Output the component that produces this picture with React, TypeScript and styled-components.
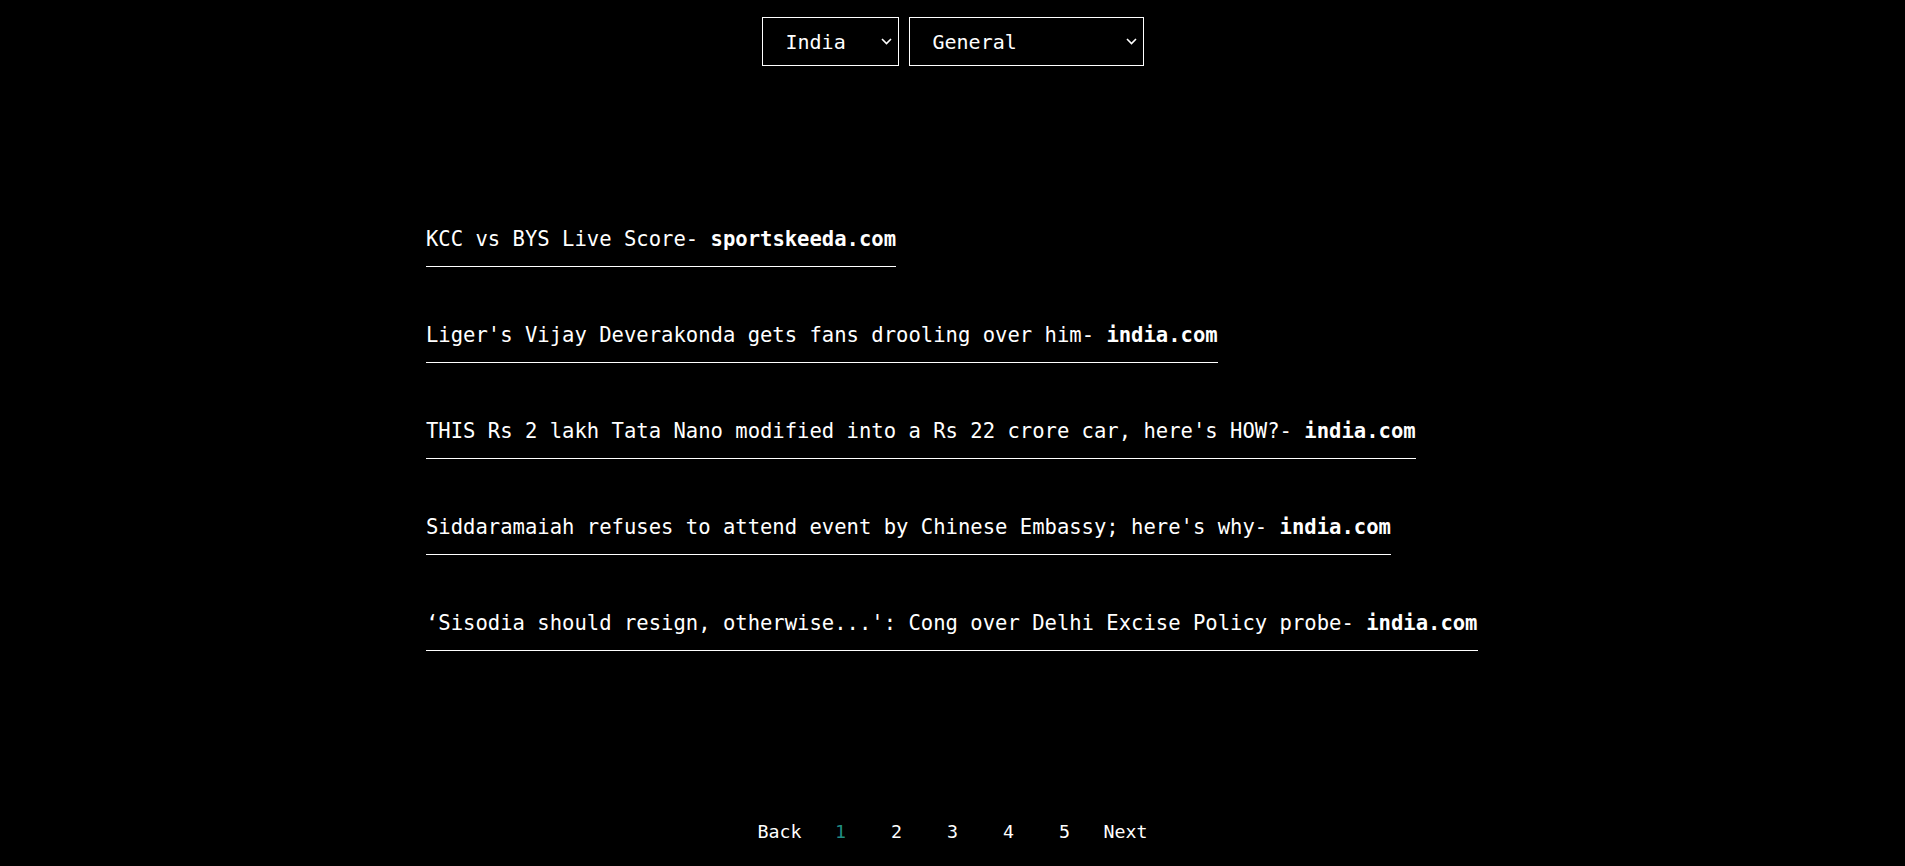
import React, { useState } from "react";
import styled, { createGlobalStyle } from "styled-components";

const GlobalStyle = createGlobalStyle`
  html, body {
    margin: 0;
    padding: 0;
    background: #000;
    color: #fff;
    font-family: "DejaVu Sans Mono", "Liberation Mono", monospace;
  }
`;

const Page = styled.div`
  min-height: 866px;
  background: #000;
  display: flex;
  flex-direction: column;
`;

const Header = styled.header`
  display: flex;
  justify-content: center;
  gap: 10px;
  padding-top: 17px;
`;

const SelectWrap = styled.div`
  position: relative;
  display: inline-flex;
`;

const Select = styled.select<{ $w: number }>`
  appearance: none;
  -webkit-appearance: none;
  width: ${(p) => p.$w}px;
  height: 49px;
  box-sizing: border-box;
  background: #000;
  color: #fff;
  border: 1px solid #fff;
  border-radius: 0;
  padding: 0 24px 0 23px;
  font-family: "DejaVu Sans Mono", "Liberation Mono", monospace;
  font-size: 20px;
  outline: none;
  cursor: pointer;
`;

const Chevron = styled.svg`
  position: absolute;
  right: 7px;
  top: 21px;
  width: 11px;
  height: 7px;
  pointer-events: none;
`;

const List = styled.main`
  width: 1053px;
  margin: 160px auto 0;
  display: flex;
  flex-direction: column;
  align-items: flex-start;
  gap: 55px;
`;

const Item = styled.a`
  display: block;
  color: #fff;
  text-decoration: none;
  font-size: 20.55px;
  line-height: 26px;
  padding-bottom: 14px;
  border-bottom: 1px solid #fff;
  white-space: nowrap;
`;

const Source = styled.b`
  font-weight: bold;
`;

const Pager = styled.nav`
  display: flex;
  justify-content: center;
  align-items: center;
  gap: 22px;
  margin-top: 170px;
  font-size: 18.3px;
  line-height: 22px;
`;

const PageLink = styled.span<{ $active?: boolean; $num?: boolean }>`
  color: ${(p) => (p.$active ? "#208c82" : "#fff")};
  margin: 0 ${(p) => (p.$num ? 11.5 : 0)}px;
  cursor: pointer;
`;

const news = [
  { title: "KCC vs BYS Live Score", source: "sportskeeda.com" },
  { title: "Liger's Vijay Deverakonda gets fans drooling over him", source: "india.com" },
  { title: "THIS Rs 2 lakh Tata Nano modified into a Rs 22 crore car, here's HOW?", source: "india.com" },
  { title: "Siddaramaiah refuses to attend event by Chinese Embassy; here's why", source: "india.com" },
  { title: "\u2018Sisodia should resign, otherwise...': Cong over Delhi Excise Policy probe", source: "india.com" },
];

const ChevronIcon = () => (
  <Chevron viewBox="0 0 11 7">
    <path d="M1 1 L5.5 5.5 L10 1" fill="none" stroke="#fff" strokeWidth="1.6" />
  </Chevron>
);

export default function App() {
  const [country, setCountry] = useState("in");
  const [category, setCategory] = useState("general");
  const [page, setPage] = useState(1);
  return (
    <Page>
      <GlobalStyle />
      <Header>
        <SelectWrap>
          <Select $w={137} value={country} onChange={(e) => setCountry(e.target.value)}>
            <option value="in">India</option>
            <option value="us">USA</option>
            <option value="gb">UK</option>
          </Select>
          <ChevronIcon />
        </SelectWrap>
        <SelectWrap>
          <Select $w={235} value={category} onChange={(e) => setCategory(e.target.value)}>
            <option value="general">General</option>
            <option value="business">Business</option>
            <option value="sports">Sports</option>
            <option value="technology">Technology</option>
          </Select>
          <ChevronIcon />
        </SelectWrap>
      </Header>
      <List>
        {news.map((n) => (
          <Item key={n.title} href="#">
            {n.title}- <Source>{n.source}</Source>
          </Item>
        ))}
      </List>
      <Pager>
        <PageLink onClick={() => setPage(Math.max(1, page - 1))}>Back</PageLink>
        {[1, 2, 3, 4, 5].map((n) => (
          <PageLink key={n} $num $active={n === page} onClick={() => setPage(n)}>
            {n}
          </PageLink>
        ))}
        <PageLink onClick={() => setPage(Math.min(5, page + 1))}>Next</PageLink>
      </Pager>
    </Page>
  );
}
